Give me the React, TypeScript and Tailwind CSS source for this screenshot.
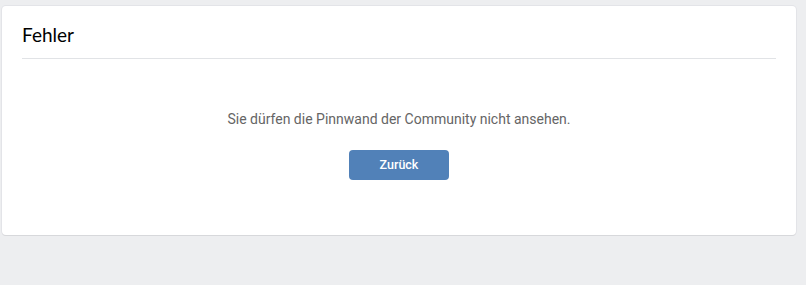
export default function App() {
  return (
    <div className="min-h-[285px] w-full bg-[#edeef0] pt-[6px] pl-[2px]" style={{ fontFamily: "Roboto, 'Open Sans', sans-serif" }}>
      <div className="w-[794px] h-[229px] rounded-[4px] bg-white shadow-[0_1px_0_0_#d7d8db,0_0_0_1px_#e3e4e8] px-[20px]">
        <div className="h-[53px] flex items-end pb-[14px] border-b border-[#e1e3e6]">
          <h1 className="text-[19px] leading-none text-[#000] font-['Lato',sans-serif]">Fehler</h1>
        </div>
        <div className="flex flex-col items-center pt-[50px]">
          <p className="text-[14px] leading-[20px] text-[#656565]">Sie dürfen die Pinnwand der Community nicht ansehen.</p>
          <button className="mt-[21px] w-[100px] h-[30px] rounded-[4px] bg-[#5181b8] text-white text-[12.5px] font-medium">Zurück</button>
        </div>
      </div>
    </div>
  );
}
